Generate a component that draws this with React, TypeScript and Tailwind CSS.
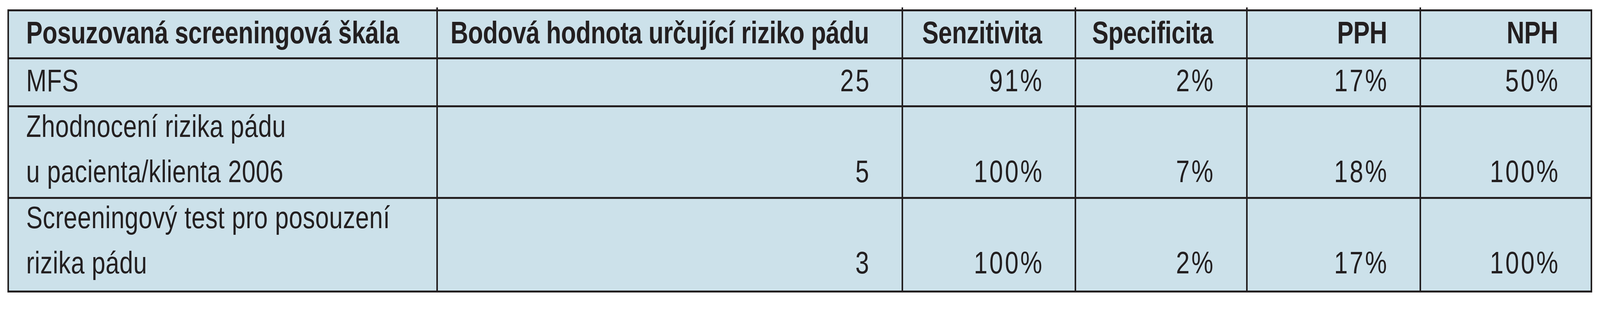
import type { ReactNode } from "react";

type Row = {
  name: string[];
  values: string[];
};

const rows: Row[] = [
  { name: ["MFS"], values: ["25", "91%", "2%", "17%", "50%"] },
  {
    name: ["Zhodnocení rizika pádu", "u pacienta/klienta 2006"],
    values: ["5", "100%", "7%", "18%", "100%"],
  },
  {
    name: ["Screeningový test pro posouzení", "rizika pádu"],
    values: ["3", "100%", "2%", "17%", "100%"],
  },
];

const headers = ["Bodová hodnota určující riziko pádu", "Senzitivita", "Specificita", "PPH", "NPH"];

const cols =
  "grid-cols-[minmax(0,27.16fr)_minmax(0,29.46fr)_minmax(0,10.89fr)_minmax(0,10.79fr)_minmax(0,10.93fr)_minmax(0,10.77fr)]";

// the table was set for a 5217px wide page; squeeze the type by the same
// ratio when the window is narrower so the lines keep their proportions
const squeeze = typeof window !== "undefined" ? Math.min(1, window.innerWidth / 5217) : 1;

function Fit({ children, right, className = "" }: { children: ReactNode; right?: boolean; className?: string }) {
  return (
    <div
      className={`whitespace-nowrap ${right ? "origin-right" : "origin-left"} ${className}`}
      style={{ transform: `scaleX(${squeeze})` }}
    >
      {children}
    </div>
  );
}

export default function App() {
  return (
    <div className="min-h-[800px] w-full bg-white pl-[0.46vw] pr-[0.48vw] pt-[19px] font-['Liberation_Sans',Arial,sans-serif] text-[80px] text-[#231f20]">
      {/* ticks of the column rules poking out above the table */}
      <div className="px-[0.096vw]">
        <div className={`grid h-[5px] ${cols} gap-x-[0.096vw] bg-[#231f20]`}>
          <div className="bg-white" />
          <div className="bg-white" />
          <div className="bg-white" />
          <div className="bg-white" />
          <div className="bg-white" />
          <div className="bg-white" />
        </div>
      </div>

      <div
        className={`grid ${cols} grid-rows-[118px_118px_230px_235px] gap-x-[0.096vw] gap-y-[5px] bg-[#231f20] px-[0.096vw] py-[5px]`}
      >
        <div className="bg-[#cce1ea] pl-[1.07vw] font-bold">
          <Fit className="leading-[110px] tracking-[-0.4px]">Posuzovaná screeningová škála</Fit>
        </div>
        {headers.map((h) => (
          <div key={h} className="flex justify-end bg-[#cce1ea] pr-[2.05vw] font-bold">
            <Fit right className="leading-[110px] tracking-[-0.5px]">
              {h}
            </Fit>
          </div>
        ))}

        {rows.map((row, i) => {
          const twoLine = row.name.length > 1;
          const shift = i === 1 ? "-mt-[9px]" : "-mt-[10px]";
          return [
            <div key={`n${i}`} className="bg-[#cce1ea] pl-[1.07vw]">
              {twoLine ? (
                <Fit className={`${shift} leading-[116px] tracking-[0.7px]`}>
                  {row.name[0]}
                  <br />
                  {row.name[1]}
                </Fit>
              ) : (
                <Fit className="leading-[110px] tracking-[0.7px]">{row.name[0]}</Fit>
              )}
            </div>,
            ...row.values.map((v, j) => (
              <div key={`v${i}-${j}`} className="flex items-start justify-end bg-[#cce1ea] pr-[2.05vw]">
                {twoLine ? (
                  <Fit right className={`${shift} -mr-[5px] text-right leading-[116px] tracking-[6px]`}>
                    <br />
                    {v}
                  </Fit>
                ) : (
                  <Fit right className="-mr-[5px] leading-[110px] tracking-[6px]">
                    {v}
                  </Fit>
                )}
              </div>
            )),
          ];
        })}
      </div>
    </div>
  );
}
